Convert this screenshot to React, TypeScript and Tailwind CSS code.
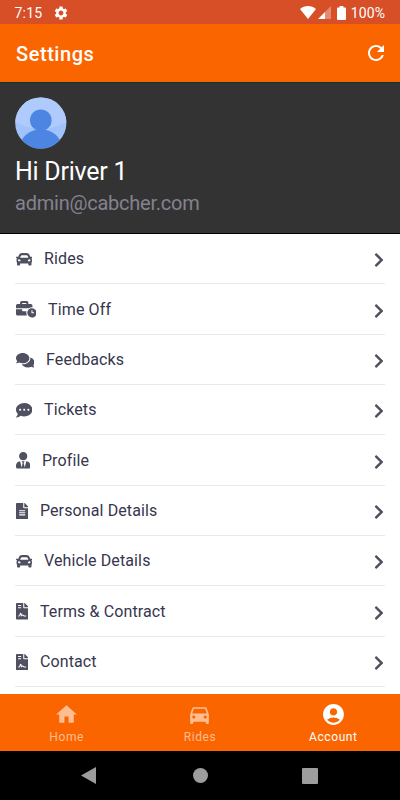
import { FC } from 'react';
import { IconType } from 'react-icons';
import {
  FaBusinessTime,
  FaCar,
  FaChevronRight,
  FaCommentDots,
  FaComments,
  FaFileAlt,
  FaFileContract,
  FaUserTie,
} from 'react-icons/fa';
import { MdAccountCircle, MdDirectionsCar, MdHome, MdRefresh, MdSettings } from 'react-icons/md';

interface MenuItem {
  label: string;
  icon: IconType;
  iconClass: string;
}

const menuItems: MenuItem[] = [
  { label: 'Rides', icon: FaCar, iconClass: 'w-[16.5px]' },
  { label: 'Time Off', icon: FaBusinessTime, iconClass: 'w-[20.6px]' },
  { label: 'Feedbacks', icon: FaComments, iconClass: 'w-[18.5px]' },
  { label: 'Tickets', icon: FaCommentDots, iconClass: 'w-[16.5px]' },
  { label: 'Profile', icon: FaUserTie, iconClass: 'w-[14.4px]' },
  { label: 'Personal Details', icon: FaFileAlt, iconClass: 'w-[12.4px]' },
  { label: 'Vehicle Details', icon: FaCar, iconClass: 'w-[16.5px]' },
  { label: 'Terms & Contract', icon: FaFileContract, iconClass: 'w-[12.4px]' },
  { label: 'Contact', icon: FaFileContract, iconClass: 'w-[12.4px]' },
];

const tabs = [
  { label: 'Home', icon: MdHome, active: false },
  { label: 'Rides', icon: MdDirectionsCar, active: false },
  { label: 'Account', icon: MdAccountCircle, active: true },
];

const StatusBar: FC = () => (
  <div className="flex h-6 shrink-0 items-center bg-[#d64f27] pl-[14.5px] pr-[15px] pt-[2px] text-[14px] text-white">
    <span className="tracking-[0.2px]">7:15</span>
    <MdSettings className="-mt-px ml-[10.5px] h-4 w-4" />
    <div className="ml-auto flex items-center">
      <svg viewBox="0 0 16 13" className="-mt-px h-[13px] w-4" fill="currentColor">
        <path d="M8 13 0 3.1C2.2 1.2 5 0 8 0s5.8 1.2 8 3.1L8 13Z" />
      </svg>
      <svg viewBox="0 0 13 13" className="-mt-px ml-0.5 h-[13px] w-[13px]" fill="currentColor">
        <path d="M7 6 13 0v13H7Z" opacity=".35" />
        <path d="M0 13 7 6v7H0Z" />
      </svg>
      <svg viewBox="0 0 9 14" className="-mt-px ml-[6.5px] h-[14px] w-[9px]" fill="currentColor">
        <path d="M2.6 0h3.8v1.4H8a1 1 0 0 1 1 1V13a1 1 0 0 1-1 1H1a1 1 0 0 1-1-1V2.4a1 1 0 0 1 1-1h1.6Z" />
      </svg>
      <span className="ml-[4.5px] tracking-[0.1px]">100%</span>
    </div>
  </div>
);

const ProfileHeader: FC = () => (
  <div className="h-[152px] shrink-0 border-b border-t border-b-black border-t-[#103438] bg-[#333333] px-[15px] pt-[14px]">
    <svg viewBox="0 0 52 52" className="h-[52px] w-[52px]">
      <defs>
        <clipPath id="avatar">
          <circle cx="25.8" cy="26" r="25.6" />
        </clipPath>
      </defs>
      <g clipPath="url(#avatar)">
        <rect width="52" height="52" fill="#a1c2fa" />
        <path d="M0 0h52v25C44 29 35 32 26 32S8 29 0 25Z" fill="#afcbfb" />
        <circle cx="25.8" cy="23.2" r="10.8" fill="#4d86e2" />
        <ellipse cx="25.8" cy="50.5" rx="21" ry="18" fill="#4d86e2" />
      </g>
    </svg>
    <h2 className="mt-[7px] text-[25px] leading-8 tracking-[-0.25px] text-white">Hi Driver 1</h2>
    <p className="mt-px text-[20px] leading-7 tracking-[-0.23px] text-[#83828f]">admin@cabcher.com</p>
  </div>
);

const MenuRow: FC<{ item: MenuItem }> = ({ item }) => {
  const Icon = item.icon;
  return (
    <li className="flex h-[50.35px] items-center border-b border-[#e9e9ea] text-[#505160]">
      <Icon className={`ml-[0.5px] mt-px h-[16.5px] shrink-0 ${item.iconClass}`} />
      <span className="ml-3 mt-[1.5px] text-[16px] tracking-[0.12px] text-[#36364e]">{item.label}</span>
      <FaChevronRight className="ml-auto mt-[3px] h-4 w-3" />
    </li>
  );
};

const TabBar: FC = () => (
  <nav className="flex h-[57px] shrink-0 bg-[#fb6500]">
    {tabs.map(({ label, icon: Icon, active }) => (
      <button
        key={label}
        type="button"
        className={`flex flex-1 flex-col items-center pt-2 ${active ? 'text-white' : 'text-[#ffbd92]'}`}
      >
        <Icon className="h-[25px] w-[25px]" />
        <span className="mt-0.5 text-[12px] leading-4 tracking-[0.6px]">{label}</span>
      </button>
    ))}
  </nav>
);

const SystemNav: FC = () => (
  <div className="flex h-[49px] shrink-0 items-center bg-black pl-[81px] text-[#9d9d9d]">
    <svg viewBox="0 0 15 17" className="h-[17px] w-[15px]" fill="currentColor">
      <path d="M15 0v17L0 8.5Z" />
    </svg>
    <div className="ml-[97px] h-[15px] w-[15px] rounded-full bg-current" />
    <div className="ml-[94px] h-4 w-4 rounded-[1px] bg-current" />
  </div>
);

export default function App() {
  return (
    <div className="flex h-[800px] w-[400px] flex-col overflow-hidden bg-white font-['Roboto',sans-serif]">
      <StatusBar />
      <header className="flex h-[58px] shrink-0 items-center justify-between bg-[#fb6500] pl-4 pr-3 text-white">
        <h1 className="mt-[2px] text-[20px] font-medium tracking-[0.55px]">Settings</h1>
        <MdRefresh className="h-6 w-6" />
      </header>
      <ProfileHeader />
      <ul className="min-h-0 flex-1 overflow-hidden px-[15px]">
        {menuItems.map((item) => (
          <MenuRow key={item.label} item={item} />
        ))}
      </ul>
      <TabBar />
      <SystemNav />
    </div>
  );
}
